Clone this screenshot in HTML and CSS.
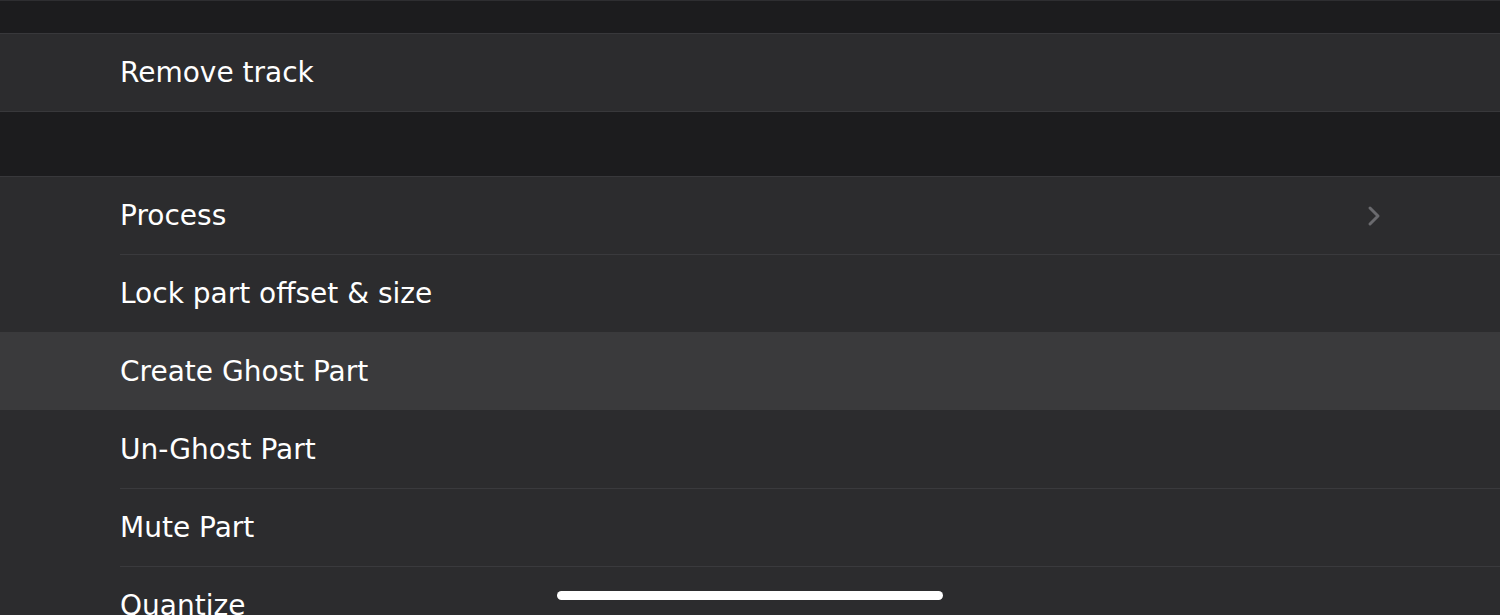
FILE: index.html
```html
<!DOCTYPE html>
<html lang="en">
<head>
  <meta charset="UTF-8">
  <meta name="viewport" content="width=device-width, initial-scale=1">
  <title>Part Actions</title>
  <link rel="stylesheet" href="styles.css">
</head>
<body>
  <div class="spacer top"></div>

  <ul class="group">
    <li class="row">Remove track</li>
  </ul>

  <div class="spacer"></div>

  <ul class="group">
    <li class="row">
      <span>Process</span>
      <svg class="chevron" width="16" height="22" viewBox="0 0 16 22">
        <polyline points="4,3 12,11 4,19" fill="none" stroke="#6a6a6e" stroke-width="3" stroke-linecap="round" stroke-linejoin="round"/>
      </svg>
    </li>
    <li class="row">Lock part offset &amp; size</li>
    <li class="row active">Create Ghost Part</li>
    <li class="row">Un-Ghost Part</li>
    <li class="row">Mute Part</li>
    <li class="row">Quantize</li>
  </ul>

  <div class="home-indicator"></div>
</body>
</html>
```
FILE: styles.css
```css
body {
  margin: 0;
  background: #1c1c1e;
  font-family: "DejaVu Sans", sans-serif;
  color: #fff;
  overflow: hidden;
  height: 615px;
}

.spacer {
  height: 64px;
}

.spacer.top {
  height: 32px;
  border-top: 1px solid #2e2e31;
}

.group {
  list-style: none;
  margin: 0;
  padding: 0;
  background: #2c2c2e;
  border-top: 1px solid #38383b;
  border-bottom: 1px solid #38383b;
}

.row {
  position: relative;
  height: 77px;
  display: flex;
  align-items: center;
  justify-content: space-between;
  padding: 0 118px 0 120px;
  font-size: 28px;
}

.row + .row {
  border-top: 1px solid transparent;
}

.row + .row::before {
  content: "";
  position: absolute;
  left: 120px;
  right: 0;
  top: -1px;
  height: 1px;
  background: #3a3a3d;
}

.row.active {
  background: #3a3a3c;
}

.row.active::before,
.row.active + .row::before {
  display: none;
}

.chevron {
  display: block;
}

.home-indicator {
  position: fixed;
  left: 557px;
  top: 591px;
  width: 386px;
  height: 9px;
  border-radius: 5px;
  background: #fff;
}
```
